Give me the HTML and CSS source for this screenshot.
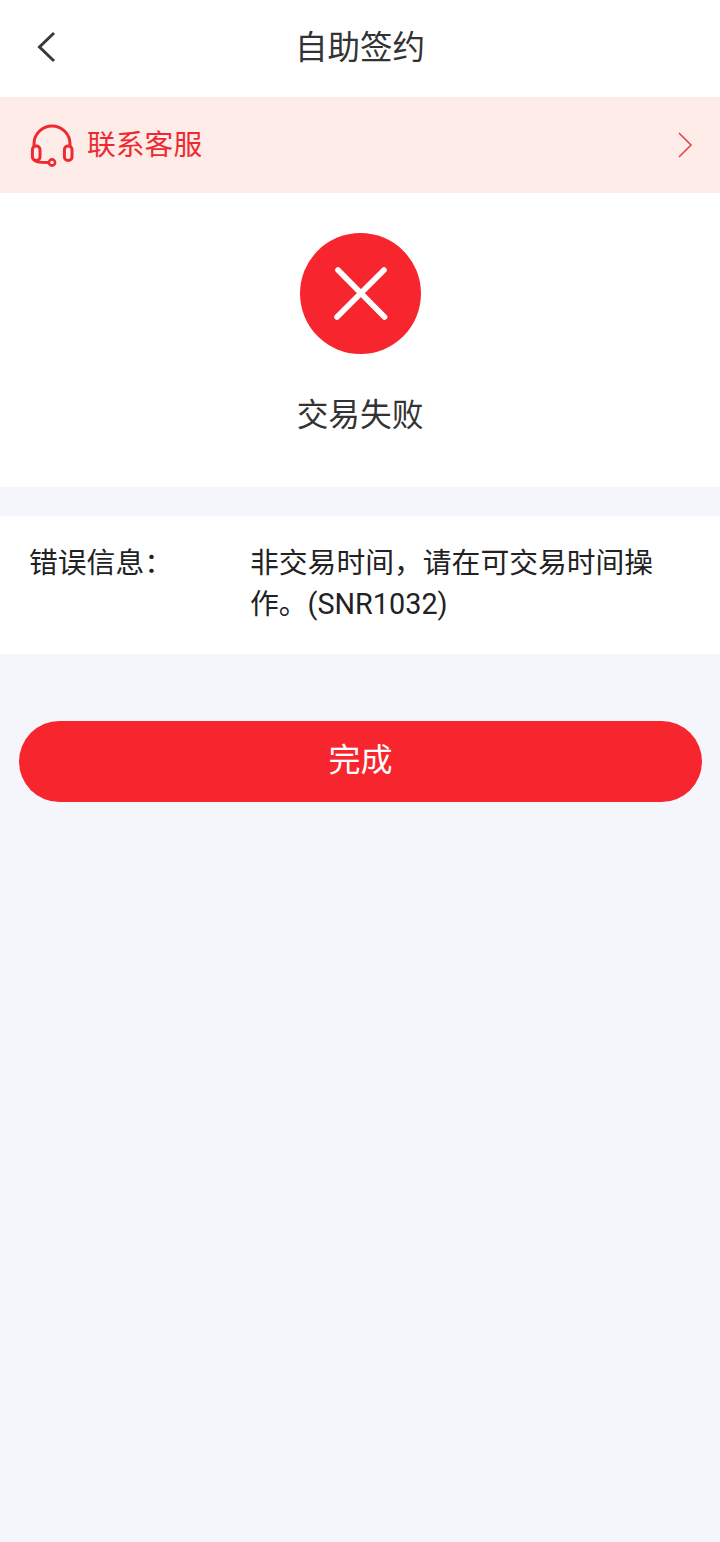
FILE: index.html
```html
<!DOCTYPE html>
<html lang="zh-CN">
<head>
    <meta charset="UTF-8">
    <meta name="viewport" content="width=device-width, initial-scale=1.0">
    <title>自助签约</title>
    <link rel="stylesheet" href="styles.css">
</head>
<body>

    <div class="title-bar">
        <svg class="back-icon" width="20" height="32" viewBox="0 0 20 32">
            <path d="M18 2 L3.5 16 L18 30" fill="none" stroke="#3a3a3c" stroke-width="3"/>
        </svg>
        <h1 class="title">自助签约</h1>
    </div>

    <div class="service-bar">
        <svg class="headset-icon" width="44" height="44" viewBox="0 0 44 44">
            <path d="M4 24 V21 A18 18 0 0 1 40 21 V24" fill="none" stroke="#ee2a30" stroke-width="3"/>
            <rect x="2.4" y="23" width="7.6" height="14.5" rx="3.6" fill="none" stroke="#ee2a30" stroke-width="3"/>
            <rect x="34.4" y="23" width="7.6" height="14.5" rx="3.6" fill="none" stroke="#ee2a30" stroke-width="3"/>
            <path d="M3.5 36 C5 39 8 39.5 18.5 39.5" fill="none" stroke="#ee2a30" stroke-width="3"/>
            <circle cx="22" cy="39.5" r="3.1" fill="none" stroke="#ee2a30" stroke-width="2.6"/>
        </svg>
        <span class="service-text">联系客服</span>
        <svg class="arrow-icon" width="16" height="26" viewBox="0 0 16 26">
            <path d="M2 1 L14 13 L2 25" fill="none" stroke="#e8434a" stroke-width="1.6"/>
        </svg>
    </div>

    <div class="result-box">
        <div class="fail-circle">
            <svg width="54" height="54" viewBox="0 0 54 54">
                <path d="M4 3 L50.5 50 M50 3 L3 50" fill="none" stroke="#fff" stroke-width="5.6" stroke-linecap="round"/>
            </svg>
        </div>
        <div class="result-text">交易失败</div>
    </div>

    <div class="error-box">
        <div class="error-label">错误信息：</div>
        <div class="error-msg">非交易时间，请在可交易时间操作。(SNR1032)</div>
    </div>

    <div class="btn-wrap">
        <button class="done-btn" type="button">完成</button>
    </div>

</body>
</html>
```

FILE: styles.css
```css
html, body {
    margin: 0;
    padding: 0;
}
body {
    height: 1542px;
    overflow: hidden;
    background-color: #f5f6fb;
    font-family: "Roboto", "Noto Sans CJK SC", sans-serif;
}
.title-bar {
    height: 97px;
    box-sizing: border-box;
    padding-bottom: 8px;
    background-color: #fff;
    display: flex;
    align-items: center;
    justify-content: center;
    position: relative;
}
.back-icon {
    position: absolute;
    left: 36px;
    top: 31px;
}
.title {
    margin: 0;
    font-size: 32.5px;
    font-weight: 400;
    color: #333;
}
.service-bar {
    height: 96px;
    box-sizing: border-box;
    background-color: #feece9;
    display: flex;
    align-items: center;
    padding: 0 27px 0 30px;
}
.headset-icon {
    margin-right: 13px;
}
.service-text {
    flex: 1;
    padding-bottom: 6px;
    font-size: 28.8px;
    color: #ee2a30;
}
.result-box {
    height: 294px;
    background-color: #fff;
    display: flex;
    flex-direction: column;
    align-items: center;
    padding-top: 40px;
    box-sizing: border-box;
}
.fail-circle {
    width: 121px;
    height: 121px;
    margin-left: 1px;
    border-radius: 50%;
    background-color: #f7262e;
    display: flex;
    align-items: center;
    justify-content: center;
}
.result-text {
    margin-top: 39px;
    font-size: 31.7px;
    line-height: 46px;
    color: #333;
}
.error-box {
    margin-top: 29px;
    background-color: #fff;
    display: flex;
    padding: 27px 30px 29px 29px;
    font-size: 28.8px;
    line-height: 41px;
    color: #222;
}
.error-label {
    width: 221px;
    flex-shrink: 0;
}
.error-msg {
    flex: 1;
    padding-right: 30px;
}
.btn-wrap {
    padding: 67px 18px 0 19px;
}
.done-btn {
    display: block;
    width: 100%;
    height: 81px;
    padding: 0 0 9px;
    border: none;
    border-radius: 41px;
    background-color: #f7262e;
    color: #fff;
    font-family: inherit;
    font-size: 32px;
}
```
